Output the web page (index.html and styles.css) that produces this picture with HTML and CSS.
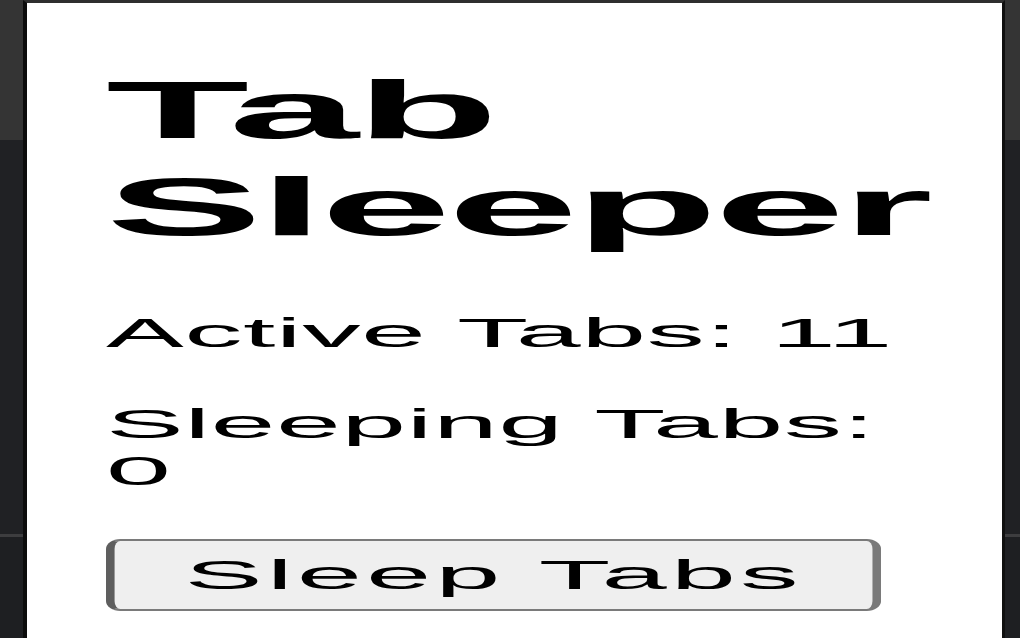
FILE: index.html
```html
<!DOCTYPE html>
<html lang="en">
<head>
<meta charset="utf-8">
<title>Tab Sleeper</title>
<link rel="stylesheet" href="styles.css">
</head>
<body>
<div class="frame">
  <div class="side side-left"></div>
  <main class="panel">
    <div class="content">
      <h1 class="title">Tab Sleeper</h1>
      <p class="stat">Active Tabs: <span class="count">11</span></p>
      <p class="stat stat-sleeping">Sleeping Tabs: <span class="count">0</span></p>
      <button class="sleep-btn" type="button">Sleep Tabs</button>
    </div>
  </main>
  <div class="side side-right"></div>
</div>
</body>
</html>
```

FILE: styles.css
```css
html, body {
  margin: 0;
  padding: 0;
  height: 638px;
  overflow: hidden;
  background: #1f2023;
}

.frame {
  display: flex;
  height: 638px;
  width: 1020px;
}

.side {
  background: linear-gradient(to bottom,
    #343434 0, #343434 140px,
    #202124 140px, #202124 534px,
    #3d3d3f 534px, #3d3d3f 537px,
    #1e1f22 537px);
}

.side-left {
  width: 23px;
}

.side-right {
  width: 15px;
}

.panel {
  flex: 1;
  background: #ffffff;
  border-top: 3px solid #2f2f2f;
  border-left: 4px solid #0c0c0c;
  border-right: 3px solid #101010;
  padding-top: 58px;
  box-sizing: border-box;
  height: 638px;
  overflow: hidden;
  font-family: "Liberation Sans", Arial, Helvetica, sans-serif;
  color: #000;
}

.content {
  margin-left: 79px;
  width: 292px;
  transform: scaleX(2.86);
  transform-origin: 0 0;
}

.title {
  margin: 0;
  font-size: 82px;
  line-height: 97px;
  font-weight: bold;
  letter-spacing: -1.2px;
}

.stat {
  margin: 55px 0 0 0;
  font-size: 40.8px;
  line-height: 47px;
  letter-spacing: 0.15px;
}

.stat-sleeping {
  margin-top: 44px;
}

.sleep-btn {
  display: block;
  margin-top: 44px;
  width: 271px;
  height: 72px;
  padding: 0;
  background: #efefef;
  border-style: solid;
  border-color: #7a7a7a;
  border-width: 2px 3px;
  border-left-color: #5e5e5e;
  border-radius: 5px / 10px;
  font-family: "Liberation Sans", Arial, Helvetica, sans-serif;
  font-size: 41px;
  line-height: 47px;
  letter-spacing: 1.4px;
  color: #000;
  text-align: center;
}
```
